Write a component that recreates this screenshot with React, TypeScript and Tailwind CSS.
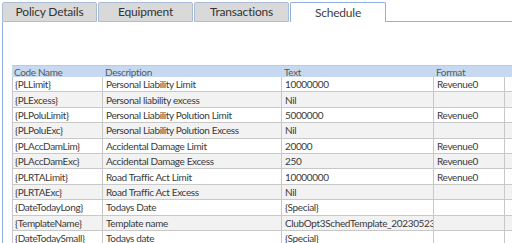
import React from "react";

const tabs = ["Policy Details", "Equipment", "Transactions", "Schedule"];

const rows: [string, string, string, string][] = [
  ["{PLLimit}", "Personal Liability Limit", "10000000", "Revenue0"],
  ["{PLExcess}", "Personal liability excess", "Nil", ""],
  ["{PLPoluLimit}", "Personal Liability Polution Limit", "5000000", "Revenue0"],
  ["{PLPoluExc}", "Personal Liability Polution Excess", "Nil", ""],
  ["{PLAccDamLim}", "Accidental Damage Limit", "20000", "Revenue0"],
  ["{PLAccDamExc}", "Accidental Damage Excess", "250", "Revenue0"],
  ["{PLRTALimit}", "Road Traffic Act Limit", "10000000", "Revenue0"],
  ["{PLRTAExc}", "Road Traffic Act Excess", "Nil", ""],
  ["{DateTodayLong}", "Todays Date", "{Special}", ""],
  ["{TemplateName}", "Template name", "ClubOpt3SchedTemplate_20230523.docx", ""],
  ["{DateTodaySmall}", "Todays date", "{Special}", ""],
];

export default function App() {
  return (
    <div
      className="w-[512px] h-[243px] overflow-hidden bg-white text-[#3a3a3a]"
      style={{ fontFamily: "Lato, 'Open Sans', sans-serif" }}
    >
      {/* tab strip */}
      <div className="flex h-[22px] pl-[2px] pt-[2px]">
        {tabs.map((t) => {
          const active = t === "Schedule";
          return (
            <div
              key={t}
              className={
                active
                  ? "w-[96px] flex items-center justify-center rounded-t-[2px] border border-b-0 border-[#8fb0dc] bg-white text-[12px] tracking-[-0.2px] text-[#404040]"
                  : "w-[95px] mr-[1px] flex items-center justify-center rounded-t-[2px] border border-[#a9bdd9] bg-[#d9d9d9] text-[12px] tracking-[-0.2px] text-[#333]"
              }
            >
              {t}
            </div>
          );
        })}
        <div className="flex-1 border-b border-[#8fb0dc]" />
      </div>

      {/* panel */}
      <div className="ml-[2px] h-[221px] border-l border-[#8fb0dc] pl-[9px] pt-[43px]">
        <div className="text-[10px] leading-none tracking-[-0.35px]">
          <div className="grid h-[12px] grid-cols-[90px_179px_152px_72px_1fr] items-center border-t border-[#c8c8c8] bg-[#c6d9f1] text-[#595959]">
            <div className="pl-[2px]">Code Name</div>
            <div className="pl-[3px]">Description</div>
            <div className="pl-[3px]">Text</div>
            <div className="pl-[3px]">Format</div>
            <div />
          </div>
          {rows.map((r, i) => (
            <div
              key={r[0]}
              className={
                "grid h-[15.4px] grid-cols-[90px_179px_152px_72px_1fr] border-b border-[#c8c8c8] " +
                (i % 2 === 1 ? "bg-[#f2f2f2]" : "bg-white")
              }
            >
              <div className="flex items-center overflow-hidden whitespace-nowrap border-l border-[#c8c8c8] pl-[2px]">
                {r[0]}
              </div>
              <div className="flex items-center overflow-hidden whitespace-nowrap border-l border-[#c8c8c8] pl-[3px]">
                {r[1]}
              </div>
              <div className="flex items-center overflow-hidden whitespace-nowrap border-l border-[#c8c8c8] pl-[3px]">
                {r[2]}
              </div>
              <div className="flex items-center overflow-hidden whitespace-nowrap border-x border-[#c8c8c8] pl-[3px]">
                {r[3]}
              </div>
              <div />
            </div>
          ))}
        </div>
      </div>
    </div>
  );
}
